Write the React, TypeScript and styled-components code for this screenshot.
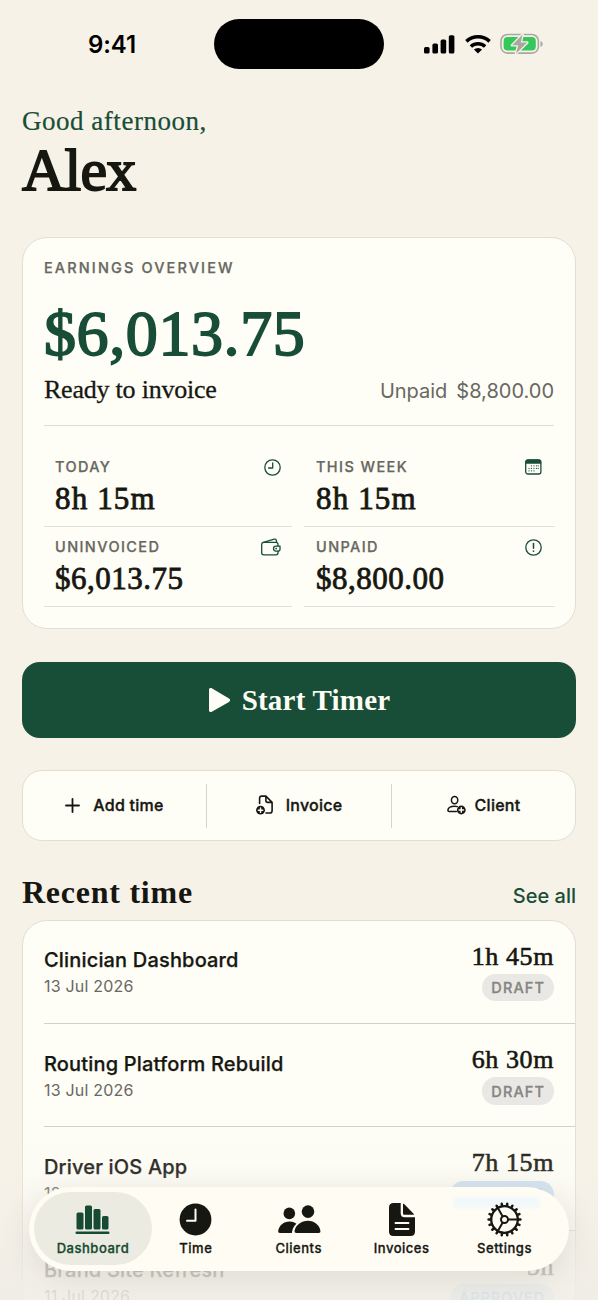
import React from "react";
import styled, { createGlobalStyle, css } from "styled-components";

const GREEN = "#184d37";
const INK = "#171712";
const MUTED = "#686863";

const Global = createGlobalStyle`
  * { box-sizing: border-box; }
  html, body { margin: 0; padding: 0; background: #f7f2e8; }
  body { font-family: Inter, "Liberation Sans", sans-serif; color: ${INK}; }
  button { font: inherit; color: inherit; border: 0; padding: 0; background: none; }
  svg { display: block; flex: none; }
`;

const serif = css`
  font-family: "Liberation Serif", serif;
`;

const Screen = styled.main`
  position: relative;
  width: 598px;
  height: 1300px;
  overflow: hidden;
  padding: 0 22px;
  background: #f7f2e8;
`;

const StatusBar = styled.header`
  height: 105px;
  display: grid;
  grid-template-columns: 192px 170px 1fr;
  align-items: start;
`;
const Clock = styled.div`
  padding-left: 66px;
  padding-top: 30px;
  font-size: 24px;
  line-height: 29px;
  font-weight: 600;
  letter-spacing: -0.1px;
  color: #000;
`;
const Island = styled.div`
  margin-top: 19px;
  height: 50px;
  border-radius: 25px;
  background: #000;
`;
const Signals = styled.div`
  padding: 33px 0 0 40px;
  display: flex;
  gap: 8.5px;
  align-items: center;
`;

const Greeting = styled.p`
  ${serif}
  margin: 0;
  font-size: 27px;
  line-height: 32px;
  letter-spacing: 0.52px;
  color: ${GREEN};
  -webkit-text-stroke: 0.2px ${GREEN};
`;
const Name = styled.h1`
  ${serif}
  margin: 3px 0 37px;
  font-size: 60px;
  line-height: 60px;
  font-weight: 400;
  letter-spacing: -0.8px;
  -webkit-text-stroke: 1.8px ${INK};
`;

const Card = styled.section`
  background: #fefdf6;
  border: 1px solid #e2ded4;
  border-radius: 25px;
`;
const Earnings = styled(Card)`
  height: 392px;
  padding: 20px 20px 0 21px;
`;
const Eyebrow = styled.div<{ $spacing?: number }>`
  font-size: 14.5px;
  line-height: 20px;
  font-weight: 500;
  letter-spacing: ${(p) => p.$spacing ?? 1.4}px;
  color: ${MUTED};
  -webkit-text-stroke: 0.25px ${MUTED};
`;
const Total = styled.div`
  ${serif}
  margin-top: 24px;
  font-size: 64px;
  line-height: 64px;
  letter-spacing: 0.6px;
  color: ${GREEN};
  -webkit-text-stroke: 1.8px ${GREEN};
`;
const Summary = styled.div`
  display: flex;
  justify-content: space-between;
  align-items: baseline;
  margin: 9.5px 1px 0 0;
  height: 50px;
  border-bottom: 1.5px solid #dddcd6;
  line-height: 28px;
`;
const Ready = styled.span`
  ${serif}
  font-size: 26px;
  letter-spacing: -0.22px;
  -webkit-text-stroke: 0.3px ${INK};
`;
const Unpaid = styled.span`
  display: flex;
  gap: 9px;
  font-size: 20px;
  color: ${MUTED};
`;
const Metrics = styled.div`
  display: grid;
  grid-template-columns: 248px 251px;
  column-gap: 12px;
  margin-top: 21px;
`;
const Metric = styled.div`
  height: 80px;
  padding: 10px 11px 0;
  border-bottom: 1px solid #e2e1da;
  &:nth-child(even) { padding: 10px 13px 0 12px; }
`;
const MetricHead = styled.div`
  display: flex;
  justify-content: space-between;
  align-items: center;
  height: 20px;
  svg { margin-top: 1px; }
`;
const MetricValue = styled.div<{ $spacing: number }>`
  ${serif}
  margin-top: 5.5px;
  font-size: 31px;
  line-height: 34px;
  letter-spacing: ${(p) => p.$spacing}px;
  -webkit-text-stroke: 0.8px ${INK};
`;

const StartButton = styled.button`
  ${serif}
  display: flex;
  width: 100%;
  height: 76px;
  margin: 33px 0 32px;
  align-items: center;
  justify-content: center;
  gap: 11px;
  border-radius: 18px;
  background: ${GREEN};
  color: #fefdf6;
  font-size: 29px;
  font-weight: 700;
  letter-spacing: 0.22px;
`;

const QuickActions = styled(Card)`
  display: grid;
  grid-template-columns: 183px 185px 1fr;
  height: 71px;
  border-radius: 20px;
  padding: 13px 0 12px;
`;
const QuickAction = styled.button<{ $gap: number }>`
  display: flex;
  align-items: center;
  justify-content: center;
  gap: ${(p) => p.$gap}px;
  font-size: 16px;
  font-weight: 500;
  letter-spacing: 0.25px;
  padding-bottom: 2px;
  -webkit-text-stroke: 0.35px ${INK};
  & + & { border-left: 1px solid #d6d4cd; }
`;

const SectionHead = styled.div`
  display: flex;
  justify-content: space-between;
  align-items: baseline;
  margin: 33px 0 9.5px;
  height: 36px;
  line-height: 36px;
`;
const SectionTitle = styled.h2`
  ${serif}
  margin: 0;
  font-size: 32px;
  font-weight: 700;
  letter-spacing: 0.75px;
`;
const SeeAll = styled.a`
  font-size: 20px;
  font-weight: 500;
  letter-spacing: 0;
  color: ${GREEN};
`;

const Entries = styled(Card)`
  height: 480px;
  padding-left: 21px;
`;
const Entry = styled.article`
  display: flex;
  justify-content: space-between;
  height: 103.4px;
  padding-right: 21px;
  border-bottom: 1px solid #d2d0ca;
`;
const EntryMain = styled.div`
  padding-top: 26.7px;
`;
const EntryTitle = styled.div`
  font-size: 20px;
  line-height: 26px;
  font-weight: 500;
  letter-spacing: 0.17px;
  -webkit-text-stroke: 0.25px ${INK};
`;
const EntryDate = styled.div`
  margin-top: 3px;
  font-size: 16px;
  line-height: 20px;
  letter-spacing: 0.2px;
  color: ${MUTED};
`;
const EntrySide = styled.div`
  display: flex;
  flex-direction: column;
  align-items: flex-end;
  padding-top: 21px;
`;
const Duration = styled.div`
  ${serif}
  font-size: 26px;
  line-height: 30px;
  letter-spacing: 0.6px;
  -webkit-text-stroke: 0.6px ${INK};
`;
const Badge = styled.span<{ $approved?: boolean }>`
  display: flex;
  align-items: center;
  margin-top: 2.4px;
  height: 27.5px;
  padding: 0 9px 0 9.5px;
  border-radius: 14px;
  font-size: 14.5px;
  font-weight: 500;
  letter-spacing: ${(p) => (p.$approved ? 0.95 : 1.1)}px;
  background: ${(p) => (p.$approved ? "#cfe2f4" : "#e9e8e4")};
  color: ${(p) => (p.$approved ? "#5aa9e6" : "#858582")};
  -webkit-text-stroke: 0.3px currentColor;
`;

const BottomFade = styled.div`
  position: absolute;
  inset: 1110px 0 0;
  background: linear-gradient(
    to bottom,
    rgba(242, 239, 230, 0) 0%,
    rgba(242, 239, 230, 0.12) 32%,
    rgba(241, 238, 230, 0.45) 60%,
    rgba(240, 237, 230, 0.78) 82%,
    rgba(240, 237, 230, 0.88) 100%
  );
`;

const TabBar = styled.nav`
  position: absolute;
  left: 29px;
  top: 1187px;
  width: 540px;
  height: 84px;
  padding: 0 12.5px;
  display: grid;
  grid-template-columns: repeat(5, 102.9px);
  border-radius: 42px;
  background: #fefcf3;
  box-shadow: 0 6px 30px rgba(80, 75, 55, 0.13);
`;
const BadgeGlow = styled.span`
  position: absolute;
  left: 424px;
  top: 10px;
  width: 87px;
  height: 11px;
  border-radius: 3px;
  background: #f2f9fb;
  filter: blur(1px);
`;
const Tab = styled.button<{ $active?: boolean }>`
  position: relative;
  display: flex;
  flex-direction: column;
  align-items: center;
  padding-top: 15px;
  font-size: 13px;
  line-height: 18px;
  font-weight: 500;
  letter-spacing: 0.52px;
  color: ${(p) => (p.$active ? "#164a32" : INK)};
  -webkit-text-stroke: 0.3px currentColor;
  svg { position: relative; }
  span { position: relative; margin-top: 2px; }
  ${(p) =>
    p.$active &&
    css`
      &::before {
        content: "";
        position: absolute;
        inset: 5px -8px 6px;
        border-radius: 37px;
        background: #ecebe1;
      }
    `}
`;

const stroke = {
  fill: "none",
  stroke: "currentColor",
  strokeLinecap: "round" as const,
  strokeLinejoin: "round" as const,
};

const CellularIcon = () => (
  <svg width="31" height="20" viewBox="0 0 31 20" fill="#000">
    <rect x="0" y="13" width="5.6" height="6.6" rx="1.6" />
    <rect x="8.4" y="9.6" width="5.6" height="10" rx="1.6" />
    <rect x="16.6" y="5.6" width="5.6" height="14" rx="1.6" />
    <rect x="24.8" y="1.2" width="5.6" height="18.4" rx="1.6" />
  </svg>
);
const WifiIcon = () => (
  <svg width="28" height="20" viewBox="0 0 28 20" fill="none" stroke="#000" strokeWidth="3.5">
    <path d="M2.400 7.400a17 17 0 0 1 23.200 0" />
    <path d="M6.900 12.500a10.500 10.500 0 0 1 14.200 0" />
    <path d="M14 19.600l-4.100-4.100a6 6 0 0 1 8.200 0z" fill="#000" stroke="none" />
  </svg>
);
const BatteryIcon = () => (
  <svg width="44" height="22" viewBox="0 0 44 22">
    <rect x="1" y="1.5" width="37.4" height="18.6" rx="6.5" fill="none" stroke="#aaa7a2" strokeWidth="1.6" />
    <path d="M40.5 8v6c1.4-.5 2.2-1.6 2.2-3s-.8-2.500-2.200-3z" fill="#aaa7a2" />
    <rect x="3.600" y="4.100" width="32.200" height="13.400" rx="4" fill="#34c759" />
    <path
      d="M22.600 1.500L12 12.300h6.200L16 20.700 27.200 9.500h-6.400z"
      fill="#aaa7a2"
      stroke="#f7f2e8"
      strokeWidth="2.600"
      paintOrder="stroke"
      strokeLinejoin="round"
    />
  </svg>
);

const ClockIcon = () => (
  <svg width="17" height="17" viewBox="0 0 17 17" color={GREEN} {...stroke} strokeWidth="1.3">
    <circle cx="8.500" cy="8.500" r="7.700" />
    <path d="M8.700 4v5H4.600" />
  </svg>
);
const CalendarIcon = () => (
  <svg width="17" height="16" viewBox="0 0 17 16" color={GREEN}>
    <rect x=".7" y=".9" width="15.200" height="14.100" rx="2.200" {...stroke} strokeWidth="1.300" />
    <path d="M.5 4.700V3A2.500 2.500 0 0 1 3 .4h10.600A2.500 2.500 0 0 1 16.100 3v1.700z" fill={GREEN} />
    <g fill={GREEN}>
      {[
        [6.500, 6.800], [9, 6.800], [11.500, 6.800], [13.200, 6.800],
        [4, 9.300], [6.500, 9.300], [9, 9.300], [11.500, 9.300], [13.200, 9.300],
        [4, 11.800], [6.500, 11.800], [9, 11.800],
      ].map(([x, y]) => (
        <circle key={`${x}-${y}`} cx={x} cy={y} r=".65" />
      ))}
    </g>
  </svg>
);
const WalletIcon = () => (
  <svg width="20" height="18" viewBox="0 0 20 18" color={GREEN} {...stroke} strokeWidth="1.300">
    <path d="M17 8V6.300a2 2 0 0 0-2-2H2.700a2 2 0 0 0-2 2v8.500a2 2 0 0 0 2 2H15a2 2 0 0 0 2-2v-1.600" />
    <path d="M1.600 4.700l11.600-3.500c1.100-.3 1.900.200 2.100 1.200l.4 1.800" />
    <path d="M19 8.100h-4a2.500 2.500 0 0 0 0 5h2.300c1 0 1.700-.6 1.700-1.600z" />
    <path d="M15 10.600h.3" strokeWidth="1.600" />
  </svg>
);
const AlertIcon = () => (
  <svg width="17" height="17" viewBox="0 0 17 17" color={GREEN} {...stroke} strokeWidth="1.300">
    <circle cx="8.500" cy="8.500" r="7.700" />
    <path d="M8.500 4.600v4.600" strokeWidth="1.500" />
    <path d="M8.500 12v.1" strokeWidth="1.700" />
  </svg>
);
const PlayIcon = () => (
  <svg width="23" height="26" viewBox="0 0 23 26" fill="#fefdf6">
    <path d="M1 2.800v20.400c0 1.700 1.400 2.300 2.800 1.500L21 14.900c1.500-.9 1.500-2.400 0-3.300L3.800 1.300C2.400.5 1 1.100 1 2.800z" />
  </svg>
);
const PlusIcon = () => (
  <svg width="15" height="15" viewBox="0 0 15 15" {...stroke} strokeWidth="1.800">
    <path d="M7.500 1v13M1 7.500h13" />
  </svg>
);
const PlusDot = ({ x, y }: { x: number; y: number }) => (
  <g transform={`translate(${x} ${y})`}>
    <circle r="4.400" fill={INK} />
    <path d="M0-2.200v4.400M-2.200 0h4.400" fill="none" stroke="#fefdf6" strokeWidth="1.400" strokeLinecap="round" />
  </g>
);
const InvoiceAddIcon = () => (
  <svg width="18" height="20" viewBox="0 0 18 20">
    <path d="M3.600 8.500V3.300c0-1.400.8-2.200 2.200-2.200h4.100l6.200 6.300v8.300c0 1.500-.8 2.300-2.200 2.300H10M9.900 1.400v4.200c0 1.200.6 1.800 1.800 1.800H16" {...stroke} strokeWidth="1.600" />
    <PlusDot x={4.500} y={15.200} />
  </svg>
);
const ClientAddIcon = () => (
  <svg width="19" height="20" viewBox="0 0 19 20">
    <ellipse cx="7.600" cy="5.100" rx="3.200" ry="3.700" {...stroke} strokeWidth="1.500" />
    <path d="M9.300 16.400H2.200c-1 0-1.400-.5-1.300-1.300.3-2.300 3-3.900 6.700-3.900 1.100 0 2 .1 2.800.4" {...stroke} strokeWidth="1.500" />
    <PlusDot x={14.300} y={15} />
  </svg>
);

const ChartIcon = () => (
  <svg width="35" height="35" viewBox="0 0 35 35" fill="currentColor">
    <rect x="1.500" y="10.500" width="7" height="17" rx="1.500" />
    <rect x="10" y="3.500" width="7" height="24" rx="1.500" />
    <rect x="18.500" y="7" width="7" height="20.500" rx="1.500" />
    <rect x="27" y="14" width="6.500" height="13.500" rx="1.500" />
    <rect x=".5" y="29.500" width="34" height="2.600" rx="1.300" />
  </svg>
);
const TimeIcon = () => (
  <svg width="35" height="35" viewBox="0 0 35 35">
    <circle cx="17.500" cy="17.500" r="15.900" fill={INK} />
    <path d="M17.500 7.500v11.200H9" fill="none" stroke="#fefcf3" strokeWidth="2" strokeLinecap="round" strokeLinejoin="round" />
  </svg>
);
const ClientsIcon = () => (
  <svg width="44" height="35" viewBox="0 0 44 35" fill={INK}>
    <circle cx="12.300" cy="11.400" r="5.800" />
    <path d="M3 31c-1.400 0-2-.8-1.800-2.200.8-5.200 5.500-9.300 11.200-9.300 2.600 0 5 .8 7 2.200-2.400 2.200-3.900 5-4.300 8L14.900 31z" />
    <circle cx="31" cy="9.600" r="6.300" />
    <path d="M19.400 31c-1.400 0-2-.8-1.800-2.200.9-5.600 6.700-10 13.300-10s11.600 4.400 12.500 10c.2 1.400-.4 2.200-1.800 2.200z" />
  </svg>
);
const InvoicesIcon = () => (
  <svg width="28" height="35" viewBox="0 0 28 35" fill={INK}>
    <path d="M5.500 1h7.200v10.300c0 2.600 1.300 3.900 3.900 3.900H27v14.300c0 3-1.600 4.500-4.500 4.500h-17C2.600 34 1 32.500 1 29.500v-24C1 2.500 2.600 1 5.500 1z" />
    <path d="M15 1.500c.5.200 1 .6 1.600 1.100l8.300 8.400c.6.600 1.100 1.200 1.300 1.800h-9.600c-1.100 0-1.600-.5-1.600-1.600z" />
    <path d="M7.500 21h13M7.500 27h13" stroke="#fefcf3" strokeWidth="1.900" strokeLinecap="round" />
  </svg>
);
const SettingsIcon = () => (
  <svg width="35" height="35" viewBox="0 0 35 35" fill="none" stroke={INK}>
    <circle cx="17.500" cy="17.500" r="13.300" strokeWidth="2.300" />
    <circle cx="17.500" cy="17.500" r="3.500" strokeWidth="2" />
    {Array.from({ length: 18 }, (_, i) => (
      <path key={i} d="M17.500 3.800V1.600" strokeWidth="2.500" strokeLinecap="round" transform={`rotate(${i * 20 + 10} 17.500 17.500)`} />
    ))}
    <path d="M21 17.500h9.500M15.700 14.500L11 6.300M15.700 20.500L11 28.700" strokeWidth="2" />
  </svg>
);

const metrics = [
  { label: "TODAY", value: "8h 15m", icon: <ClockIcon />, spacing: 1.15 },
  { label: "THIS WEEK", value: "8h 15m", icon: <CalendarIcon />, spacing: 1.15 },
  { label: "UNINVOICED", value: "$6,013.75", icon: <WalletIcon />, spacing: 0.5 },
  { label: "UNPAID", value: "$8,800.00", icon: <AlertIcon />, spacing: 0.5 },
];

const entries = [
  { title: "Clinician Dashboard", date: "13 Jul 2026", time: "1h 45m", status: "DRAFT" },
  { title: "Routing Platform Rebuild", date: "13 Jul 2026", time: "6h 30m", status: "DRAFT" },
  { title: "Driver iOS App", date: "12 Jul 2026", time: "7h 15m", status: "APPROVED" },
  { title: "Brand Site Refresh", date: "11 Jul 2026", time: "5h", status: "APPROVED" },
];

const tabs = [
  { label: "Dashboard", icon: <ChartIcon /> },
  { label: "Time", icon: <TimeIcon /> },
  { label: "Clients", icon: <ClientsIcon /> },
  { label: "Invoices", icon: <InvoicesIcon /> },
  { label: "Settings", icon: <SettingsIcon /> },
];

export default function App() {
  return (
    <>
      <Global />
      <Screen>
        <StatusBar>
          <Clock>9:41</Clock>
          <Island />
          <Signals>
            <CellularIcon />
            <WifiIcon />
            <BatteryIcon />
          </Signals>
        </StatusBar>

        <Greeting>Good afternoon,</Greeting>
        <Name>Alex</Name>

        <Earnings>
          <Eyebrow $spacing={2.12}>EARNINGS OVERVIEW</Eyebrow>
          <Total>$6,013.75</Total>
          <Summary>
            <Ready>Ready to invoice</Ready>
            <Unpaid>
              <span>Unpaid</span>
              <span>$8,800.00</span>
            </Unpaid>
          </Summary>
          <Metrics>
            {metrics.map((m) => (
              <Metric key={m.label}>
                <MetricHead>
                  <Eyebrow>{m.label}</Eyebrow>
                  {m.icon}
                </MetricHead>
                <MetricValue $spacing={m.spacing}>{m.value}</MetricValue>
              </Metric>
            ))}
          </Metrics>
        </Earnings>

        <StartButton>
          <PlayIcon />
          Start Timer
        </StartButton>

        <QuickActions>
          <QuickAction $gap={13}>
            <PlusIcon />
            Add time
          </QuickAction>
          <QuickAction $gap={12}>
            <InvoiceAddIcon />
            Invoice
          </QuickAction>
          <QuickAction $gap={9}>
            <ClientAddIcon />
            Client
          </QuickAction>
        </QuickActions>

        <SectionHead>
          <SectionTitle>Recent time</SectionTitle>
          <SeeAll>See all</SeeAll>
        </SectionHead>

        <Entries>
          {entries.map((e) => (
            <Entry key={e.title}>
              <EntryMain>
                <EntryTitle>{e.title}</EntryTitle>
                <EntryDate>{e.date}</EntryDate>
              </EntryMain>
              <EntrySide>
                <Duration>{e.time}</Duration>
                <Badge $approved={e.status === "APPROVED"}>{e.status}</Badge>
              </EntrySide>
            </Entry>
          ))}
        </Entries>

        <BottomFade />
        <TabBar>
          <BadgeGlow />
          {tabs.map((t, i) => (
            <Tab key={t.label} $active={i === 0}>
              {t.icon}
              <span>{t.label}</span>
            </Tab>
          ))}
        </TabBar>
      </Screen>
    </>
  );
}
